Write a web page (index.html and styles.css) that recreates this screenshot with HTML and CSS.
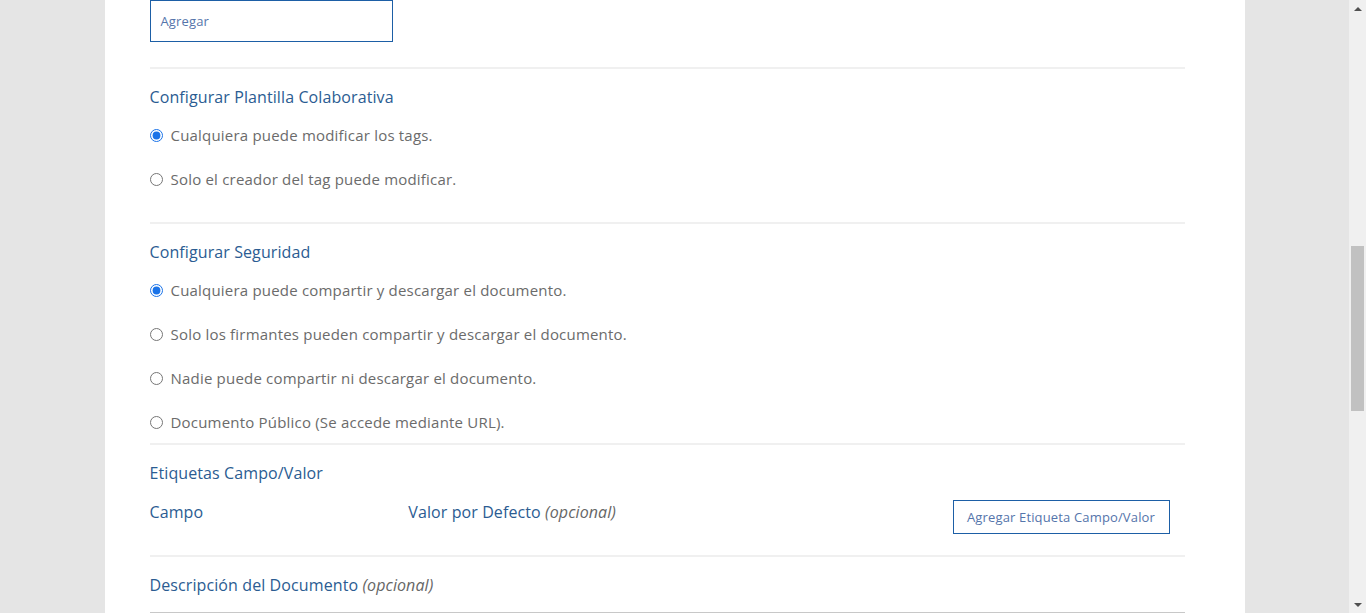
FILE: index.html
```html
<!DOCTYPE html>
<html lang="es">
<head>
<meta charset="utf-8">
<title>Configuración</title>
<link rel="stylesheet" href="styles.css">
</head>
<body>
<div class="page">
  <main class="card">
    <button class="btn btn-add" type="button">Agregar</button>
    <hr class="divider div-1">

    <section class="section">
      <h3 class="title">Configurar Plantilla Colaborativa</h3>
      <div class="options">
        <label class="option"><input type="radio" name="colab" checked><span>Cualquiera puede modificar los tags.</span></label>
        <label class="option"><input type="radio" name="colab"><span>Solo el creador del tag puede modificar.</span></label>
      </div>
    </section>
    <hr class="divider div-2">

    <section class="section">
      <h3 class="title">Configurar Seguridad</h3>
      <div class="options">
        <label class="option"><input type="radio" name="seg" checked><span>Cualquiera puede compartir y descargar el documento.</span></label>
        <label class="option"><input type="radio" name="seg"><span>Solo los firmantes pueden compartir y descargar el documento.</span></label>
        <label class="option"><input type="radio" name="seg"><span>Nadie puede compartir ni descargar el documento.</span></label>
        <label class="option"><input type="radio" name="seg"><span>Documento Público (Se accede mediante URL).</span></label>
      </div>
    </section>
    <hr class="divider div-3">

    <section class="section">
      <h3 class="title">Etiquetas Campo/Valor</h3>
      <div class="fields">
        <span class="col-label">Campo</span>
        <span class="col-label">Valor por Defecto <em>(opcional)</em></span>
        <span></span>
        <div class="col-action"><button class="btn btn-tag" type="button">Agregar Etiqueta Campo/Valor</button></div>
      </div>
    </section>
    <hr class="divider div-4">

    <section class="section">
      <h3 class="title">Descripción del Documento <em>(opcional)</em></h3>
      <div class="textarea"></div>
    </section>
  </main>
</div>
<div class="scrollbar">
  <div class="arrow arrow-up"></div>
  <div class="track"><div class="thumb"></div></div>
  <div class="arrow arrow-down"></div>
</div>
</body>
</html>
```

FILE: styles.css
```css
html, body {
  margin: 0;
  padding: 0;
  height: 613px;
  overflow: hidden;
}

body {
  background: #e5e5e5;
  font-family: "Open Sans", "Liberation Sans", sans-serif;
}

.page {
  width: 1349px;
  display: flex;
  justify-content: center;
}

.card {
  width: 1140px;
  height: 613px;
  box-sizing: border-box;
  background: #ffffff;
  padding: 0 60px 0 45px;
  display: flex;
  flex-direction: column;
  align-items: flex-start;
  overflow: hidden;
}

.card > * {
  flex-shrink: 0;
}

.btn {
  background: #fff;
  border: 1px solid #1d5fa6;
  color: #5575ab;
  font-family: "Open Sans", "Liberation Sans", sans-serif;
  font-size: 13px;
  letter-spacing: 0.15px;
  cursor: pointer;
  box-sizing: border-box;
}

.btn-add {
  width: 243px;
  height: 42px;
  text-align: left;
  padding: 0 10px;
}

.divider {
  align-self: stretch;
  border: 0;
  height: 2px;
  background: #f0f0f0;
  margin: 0;
}

.div-1 { margin-top: 25px; }
.div-2 { margin-top: 32px; }
.div-3 { margin-top: 10px; }
.div-4 { margin-top: 21px; }

.section {
  align-self: stretch;
  display: flex;
  flex-direction: column;
  padding-top: 17px;
}

.title {
  margin: 0;
  font-size: 16px;
  font-weight: 400;
  line-height: 22px;
  letter-spacing: 0.1px;
  color: #2b5c92;
}

.title em, .col-label em {
  font-style: italic;
  color: #666666;
}

.options {
  display: flex;
  flex-direction: column;
  gap: 22px;
  margin-top: 16px;
}

.option {
  display: flex;
  align-items: center;
  height: 22px;
  font-size: 15px;
  letter-spacing: 0.2px;
  color: #6b6b6b;
}

.option input {
  width: 13px;
  height: 13px;
  margin: 0 8px 0 0;
  accent-color: #1a73e8;
}

.fields {
  display: grid;
  grid-template-columns: 25% 25% 25% 25%;
  align-items: center;
  margin-top: 16px;
  height: 34px;
}

.col-label {
  font-size: 16px;
  line-height: 22px;
  letter-spacing: 0.1px;
  color: #2b5c92;
  margin-top: -11px;
}

.col-action {
  display: flex;
  justify-content: flex-end;
  padding-right: 15px;
}

.btn-tag {
  height: 34px;
  width: 217px;
  padding: 0;
  text-align: center;
}

.textarea {
  margin-top: 16px;
  border-top: 1px solid #c8c8c8;
  height: 20px;
}

.scrollbar {
  position: fixed;
  top: 0;
  right: 0;
  width: 17px;
  height: 613px;
  background: #f0f0f0;
  display: flex;
  flex-direction: column;
}

.arrow {
  height: 17px;
  display: flex;
  align-items: center;
  justify-content: center;
}

.arrow-up::before, .arrow-down::before {
  content: "";
  width: 0;
  height: 0;
  border-left: 4px solid transparent;
  border-right: 4px solid transparent;
}

.arrow-up::before { border-bottom: 4px solid #505050; }
.arrow-down::before { border-top: 4px solid #505050; }

.track {
  flex: 1;
  padding-top: 229px;
}

.thumb {
  margin: 0 2px;
  height: 165px;
  background: #c1c1c1;
}
```
